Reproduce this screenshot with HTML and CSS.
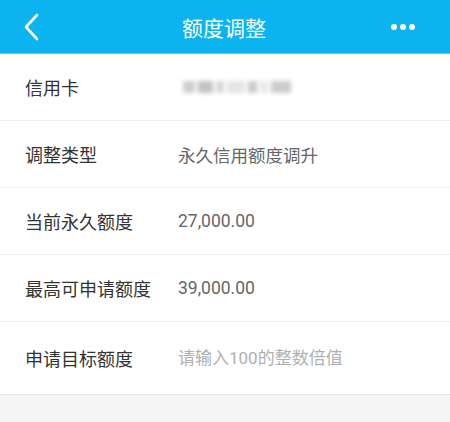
FILE: index.html
```html
<!DOCTYPE html>
<html lang="zh-CN">
<head>
    <meta charset="UTF-8">
    <meta name="viewport" content="width=device-width, initial-scale=1.0">
    <title>额度调整</title>
    <link rel="stylesheet" href="styles.css">
</head>
<body>
    <header class="topbar">
        <a class="back" href="#">
            <svg width="16" height="28" viewBox="0 0 16 28"><path d="M14 2 L3 14 L14 26" fill="none" stroke="#fff" stroke-width="2.6" stroke-linecap="round" stroke-linejoin="round"/></svg>
        </a>
        <h1>额度调整</h1>
        <span class="more"><i></i><i></i><i></i></span>
    </header>

    <div class="list">
        <div class="row">
            <span class="label">信用卡</span>
            <span class="value card-no"><b></b><b></b><b></b><b></b><b></b><b></b><b></b></span>
        </div>
        <div class="row">
            <span class="label">调整类型</span>
            <span class="value">永久信用额度调升</span>
        </div>
        <div class="row">
            <span class="label">当前永久额度</span>
            <span class="value">27,000.00</span>
        </div>
        <div class="row">
            <span class="label">最高可申请额度</span>
            <span class="value">39,000.00</span>
        </div>
        <div class="row row-input">
            <span class="label">申请目标额度</span>
            <input class="value amount" type="text" placeholder="请输入100的整数倍值">
        </div>
    </div>
</body>
</html>
```

FILE: styles.css
```css
:root {
    --brand: #0bb4ef;
    --line: #efefef;
    --page: #f5f5f5;
}

body {
    margin: 0;
    background: var(--page);
    font-family: Roboto, "Noto Sans CJK SC", "Noto Sans", sans-serif;
    color: #333;
}

.topbar {
    height: 53px;
    background: var(--brand);
    border-bottom: 1px solid #5ccbf3;
    display: grid;
    grid-template-columns: 1fr auto 1fr;
    align-items: center;
    padding: 0 35px 0 23px;
}

.topbar h1 {
    margin: 0;
    font-size: 21px;
    font-weight: 400;
    color: #fff;
    padding-left: 10px;
}

.back {
    display: flex;
    padding-top: 1px;
}

.more {
    justify-self: end;
    display: flex;
    gap: 3px;
}

.more i {
    width: 6px;
    height: 6px;
    border-radius: 50%;
    background: #fff;
}

.list {
    background: #fff;
    border-bottom: 1px solid #e6e6e6;
}

.row {
    height: 66px;
    display: flex;
    align-items: center;
    padding-left: 25px;
    border-bottom: 1px solid var(--line);
}

.row:last-child {
    border-bottom: none;
}

.row-input {
    height: 72px;
}

.label {
    width: 153px;
    font-size: 18px;
    color: #333;
}

.value {
    font-size: 17.5px;
    color: #666;
}

.amount {
    border: none;
    outline: none;
    padding: 0;
    font-family: inherit;
    font-size: 17px;
    width: 240px;
    background: transparent;
}

.amount::placeholder {
    color: #b0b0b0;
}

.card-no {
    display: flex;
    align-items: center;
    gap: 3px;
    padding-left: 5px;
    filter: blur(2px);
}

.card-no b {
    height: 12px;
    width: 12px;
    background: #cfcfcf;
}

.card-no b:nth-child(2) { width: 15px; background: #c2c2c2; }
.card-no b:nth-child(3) { width: 8px; background: #d8d8d8; }
.card-no b:nth-child(4) { width: 18px; background: #e4e4e4; }
.card-no b:nth-child(5) { width: 9px; background: #cacaca; }
.card-no b:nth-child(6) { width: 8px; background: #e8e8e8; }
.card-no b:nth-child(7) { width: 20px; background: #cccccc; }
```
